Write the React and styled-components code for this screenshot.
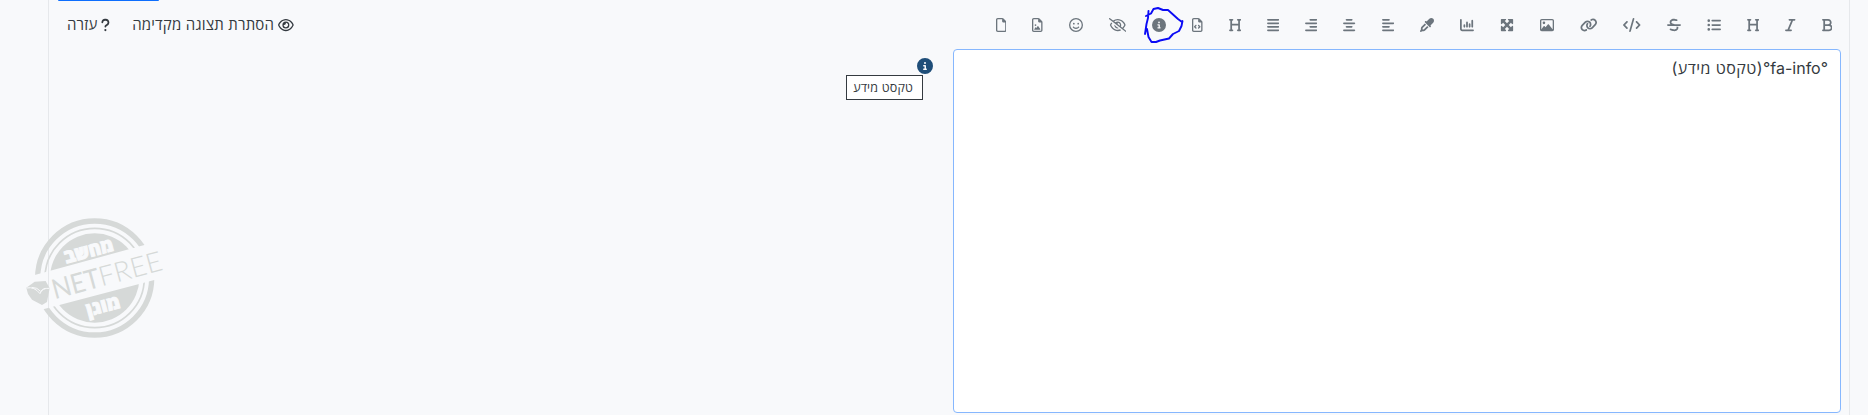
import React from 'react';
import styled, { createGlobalStyle } from 'styled-components';
import {
  FaBold, FaItalic, FaHeading, FaListUl, FaStrikethrough, FaCode, FaLink, FaRegImage,
  FaMaximize, FaChartColumn, FaEyeDropper, FaAlignLeft, FaAlignCenter, FaAlignRight,
  FaAlignJustify, FaRegFileCode, FaCircleInfo, FaRegEyeSlash, FaRegFaceSmile,
  FaRegFileImage, FaRegFile, FaRegEye, FaQuestion,
} from 'react-icons/fa6';

const GlobalStyle = createGlobalStyle`
  * { box-sizing: border-box; }
  body {
    margin: 0;
    background: #f8f9fb;
    color: #343a40;
    font-family: Inter, 'Open Sans', 'DejaVu Sans', sans-serif;
    overflow: hidden;
  }
`;

const Page = styled.div`
  position: relative;
  height: 415px;
  padding: 0 18px 0 48px;
  direction: rtl;
`;

const Composer = styled.div`
  height: 100%;
  display: flex;
  flex-direction: column;
  padding: 0 8px 2px 9px;
  border: solid #e6e8eb;
  border-width: 0 1px;
`;

const TabLine = styled.div`
  width: 101px;
  height: 1px;
  margin-right: auto;
  background: #0d6efd;
  border-radius: 0 0 2px 2px;
`;

const Toolbar = styled.div`
  display: flex;
  justify-content: space-between;
  height: 48px;
  margin-right: -4px;
  padding-left: 9px;
`;

const Group = styled.div`
  display: flex;
  height: 48px;
  gap: ${p => p.$gap || 0};
`;

const ToolButton = styled.button`
  display: flex;
  align-items: center;
  height: 48px;
  padding: 0 13px;
  border: 0;
  background: none;
  color: #6c757d;
  font-size: 14px;

  svg {
    display: block;
    flex: none;
    width: ${p => p.$icon}px;
    height: 14px;
  }
`;

const TextButton = styled(ToolButton)`
  gap: 4px;
  padding: 0;
  color: #343a40;
  font: 15px Inter, 'Open Sans', 'DejaVu Sans', sans-serif;
  letter-spacing: 0.18px;
  white-space: nowrap;
`;

const Label = styled.span`
  display: block;
  margin-top: -2px;
`;

const Panes = styled.div`
  flex: 1;
  display: grid;
  grid-template-columns: 888px 1fr;
  gap: 20px;
`;

const Editor = styled.div`
  padding: 6px 12px;
  background: #fff;
  border: 1px solid #86b7fe;
  border-radius: 4px;
  font-size: 16px;
  line-height: 24px;
`;

const Hebrew = styled.span`
  letter-spacing: 0.45px;
`;

const Preview = styled.div`
  padding-top: 9px;
`;

const InfoMark = styled.span`
  position: relative;
  display: block;
  width: 16px;
  height: 16px;
  color: #1f4e79;

  svg { display: block; }
`;

const Tooltip = styled.span`
  position: absolute;
  top: 17px;
  right: 10px;
  width: 77px;
  height: 25px;
  padding-right: 9px;
  background: #fff;
  border: 1px solid #343a40;
  color: #343a40;
  font-size: 12.5px;
  letter-spacing: 0.15px;
  line-height: 23px;
  white-space: nowrap;
`;

const Scribble = styled.svg`
  position: absolute;
  left: 1140px;
  top: 4px;
  pointer-events: none;
`;

const Stamp = styled.svg`
  position: absolute;
  left: 10px;
  top: 200px;
  direction: ltr;
  pointer-events: none;
`;

// icon and its width at 14px height
const tools = [
  [FaBold, 10.5], [FaItalic, 10.5], [FaHeading, 12.25], [FaListUl, 14],
  [FaStrikethrough, 14], [FaCode, 17.5], [FaLink, 17.5], [FaRegImage, 14],
  [FaMaximize, 14], [FaChartColumn, 14], [FaEyeDropper, 14], [FaAlignLeft, 12.25],
  [FaAlignCenter, 12.25], [FaAlignRight, 12.25], [FaAlignJustify, 12.25],
  [FaHeading, 12.25], [FaRegFileCode, 10.5], [FaCircleInfo, 14],
  [FaRegEyeSlash, 17.5], [FaRegFaceSmile, 14], [FaRegFileImage, 10.5], [FaRegFile, 10.5],
];

const NetfreeStamp = () => (
  <Stamp width="170" height="150" viewBox="0 0 510 450">
    <defs>
      <clipPath id="stamp-halves">
        <path d="M0 0H510V106L0 245Z M0 354L510 220V450H0Z" />
      </clipPath>
    </defs>
    <g clipPath="url(#stamp-halves)" fill="none" stroke="#d6d9d8">
      <circle cx="254" cy="234" r="171" strokeWidth="16" />
      <circle cx="254" cy="234" r="149" strokeWidth="5" />
      <circle cx="254" cy="234" r="134" fill="#d6d9d8" stroke="none" />
    </g>
    <g fill="#f8f9fb" stroke="#f8f9fb" strokeWidth="3" fontFamily="'Open Sans', 'DejaVu Sans', sans-serif" fontWeight="800" textAnchor="middle">
      <text transform="translate(241 171) rotate(-15)" fontSize="56" textLength="150" lengthAdjust="spacingAndGlyphs">מחשב</text>
      <text transform="translate(284 336) rotate(-15)" fontSize="56" textLength="102" lengthAdjust="spacingAndGlyphs">מוגן</text>
    </g>
    <g fill="#d6d9d8" fontFamily="Lato, sans-serif" fontSize="82" transform="translate(134 298) rotate(-15.2)">
      <text textLength="146" lengthAdjust="spacingAndGlyphs" fontWeight="400">NET</text>
      <text x="146" textLength="194" lengthAdjust="spacingAndGlyphs" fontWeight="300">FREE</text>
    </g>
    <path fill="#d6d9d8" d="M49 263L74 245L107 243L119 265L111 306L96 315L66 299L54 282Z" />
    <path fill="none" stroke="#f8f9fb" strokeWidth="3" d="M50 264Q73 259 90 281Q96 263 119 265M65 262Q82 262 92 274Q100 266 106 265" />
  </Stamp>
);

export default function App() {
  return (
    <>
      <GlobalStyle />
      <Page>
        <Composer>
          <TabLine />
          <Toolbar>
            <Group>
              {tools.map(([Icon, width], i) => (
                <ToolButton key={i} $icon={width}><Icon /></ToolButton>
              ))}
            </Group>
            <Group $gap="22px">
              <TextButton $icon={15.75}><FaRegEye /><Label>הסתרת תצוגה מקדימה</Label></TextButton>
              <TextButton $icon={8.75}><FaQuestion /><Label>עזרה</Label></TextButton>
            </Group>
          </Toolbar>
          <Panes>
            <Editor>°fa-info°<Hebrew>(טקסט מידע)</Hebrew></Editor>
            <Preview>
              <InfoMark>
                <FaCircleInfo />
                <Tooltip>טקסט מידע</Tooltip>
              </InfoMark>
            </Preview>
          </Panes>
        </Composer>
        <NetfreeStamp />
        <Scribble width="50" height="44" viewBox="0 0 50 44" fill="none" stroke="#0b0bf5" strokeWidth="1.9" strokeLinecap="round" strokeLinejoin="round">
          <path d="M8.500 7L8 14L6.500 20L5 30M6 12L11 9.500L13.500 5L18 4L23 6L28 6L33 10.500L38 15L42 18L42.500 17L41.500 22L39 27L33 30L29 34.500L20 36.500L16 38L11.500 38L8.500 33L7 25" />
        </Scribble>
      </Page>
    </>
  );
}
